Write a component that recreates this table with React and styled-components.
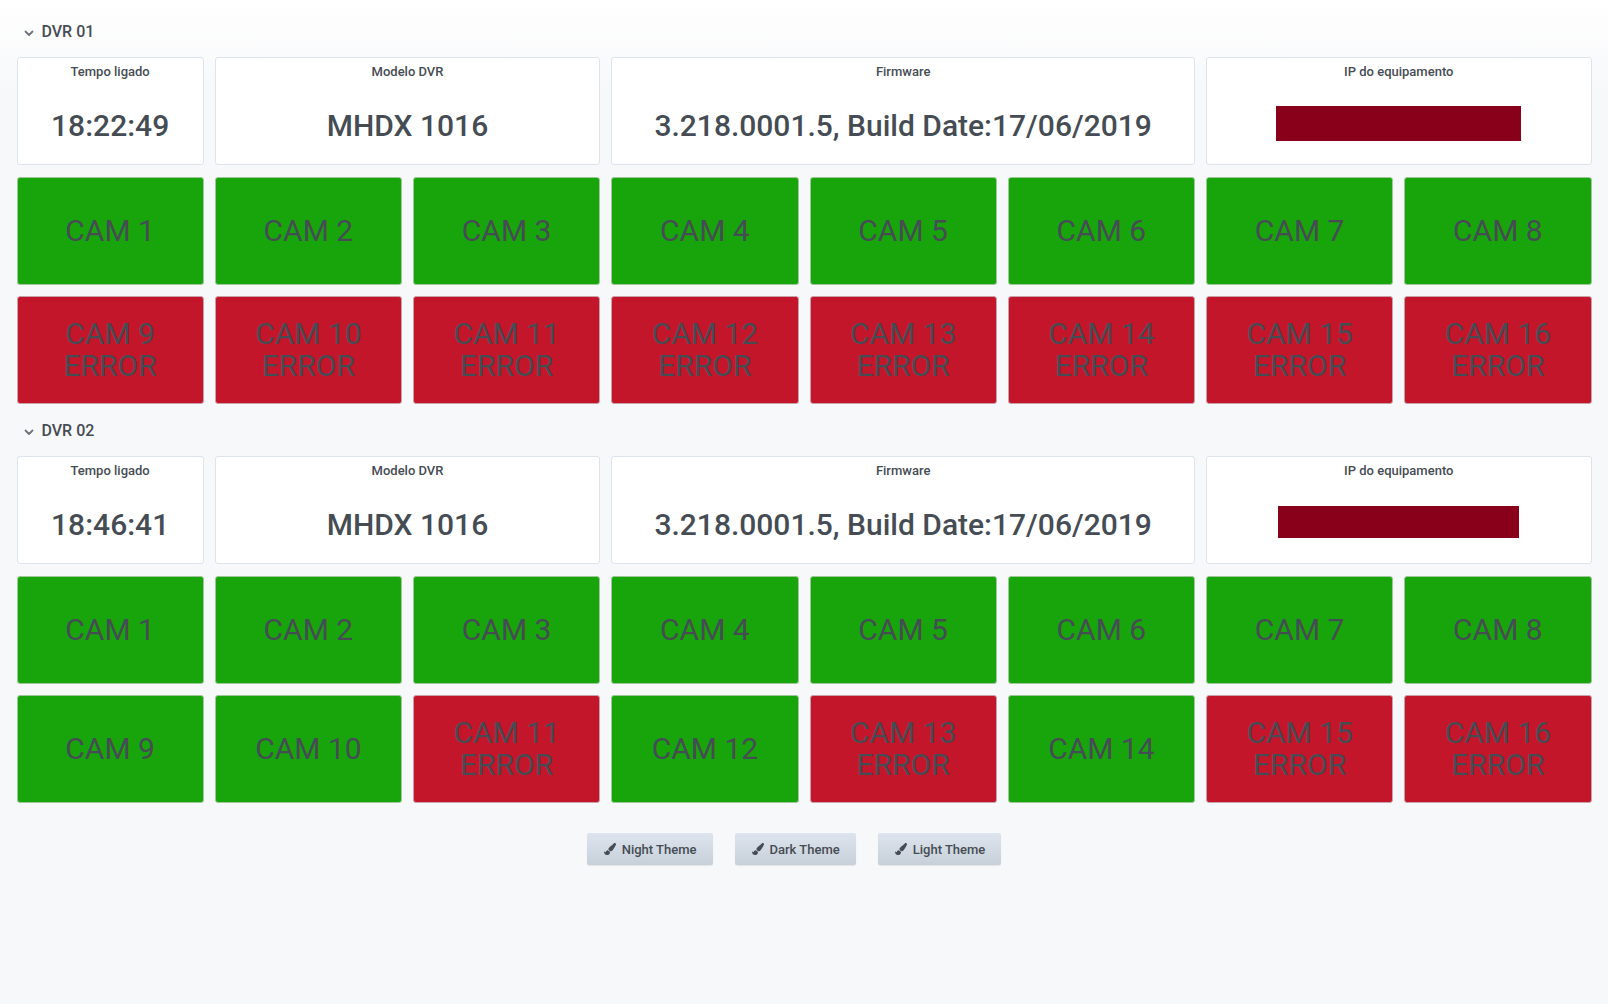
import React from 'react';
import styled, { createGlobalStyle } from 'styled-components';
import { FaPaintBrush } from 'react-icons/fa';

const GlobalStyle = createGlobalStyle`
    html, body {
        margin: 0;
        padding: 0;
    }
    body {
        min-height: 100vh;
        background: linear-gradient(180deg, #ffffff 0px, #f7f8fa 90px, #f7f8fa 100%);
        font-family: Roboto, "Liberation Sans", sans-serif;
        color: #464c54;
    }
`;

const dvrs = [
    {
        name: 'DVR 01',
        uptime: '18:22:49',
        model: 'MHDX 1016',
        firmware: '3.218.0001.5, Build Date:17/06/2019',
        ipBar: { w: 245, h: 35 },
        errors: [9, 10, 11, 12, 13, 14, 15, 16],
    },
    {
        name: 'DVR 02',
        uptime: '18:46:41',
        model: 'MHDX 1016',
        firmware: '3.218.0001.5, Build Date:17/06/2019',
        ipBar: { w: 241, h: 32 },
        errors: [11, 13, 15, 16],
    },
];

const themes = ['Night Theme', 'Dark Theme', 'Light Theme'];

const Chevron = () => (
    <ChevronIcon width="10" height="10" viewBox="0 0 10 10">
        <path d="M1.5 3.5 L5 7 L8.5 3.5" fill="none" stroke="#6e737a" strokeWidth="1.8" strokeLinecap="round" strokeLinejoin="round" />
    </ChevronIcon>
);

const App = () => {
    return (
        <>
            <GlobalStyle />
            <Page>
                {dvrs.map((dvr) => (
                    <React.Fragment key={dvr.name}>
                        <RowHeader>
                            <Chevron />
                            <RowTitle>{dvr.name}</RowTitle>
                        </RowHeader>
                        <Grid>
                            <Panel $span={1}>
                                <PanelTitle>Tempo ligado</PanelTitle>
                                <PanelBody><Value>{dvr.uptime}</Value></PanelBody>
                            </Panel>
                            <Panel $span={2}>
                                <PanelTitle>Modelo DVR</PanelTitle>
                                <PanelBody><Value>{dvr.model}</Value></PanelBody>
                            </Panel>
                            <Panel $span={3}>
                                <PanelTitle>Firmware</PanelTitle>
                                <PanelBody><Value>{dvr.firmware}</Value></PanelBody>
                            </Panel>
                            <Panel $span={2}>
                                <PanelTitle>IP do equipamento</PanelTitle>
                                <PanelBody>
                                    <Redacted style={{ width: dvr.ipBar.w, height: dvr.ipBar.h }} />
                                </PanelBody>
                            </Panel>
                            {Array.from({ length: 16 }, (_, i) => {
                                const n = i + 1;
                                const error = dvr.errors.includes(n);
                                return (
                                    <Cam key={n} $error={error}>
                                        <CamText>
                                            CAM {n}
                                            {error && <><br />ERROR</>}
                                        </CamText>
                                    </Cam>
                                );
                            })}
                        </Grid>
                    </React.Fragment>
                ))}
                <ButtonBar>
                    {themes.map((t) => (
                        <ThemeButton key={t}>
                            <FaPaintBrush size={12} />
                            {t}
                        </ThemeButton>
                    ))}
                </ButtonBar>
            </Page>
        </>
    );
};

const Page = styled.div`
    display: flex;
    flex-direction: column;
    gap: 11px;
    padding: 16px 16.5px 0 16.5px;
`;

const RowHeader = styled.div`
    display: flex;
    align-items: center;
    gap: 8px;
    height: 30px;
    padding-left: 7px;
`;

const ChevronIcon = styled.svg`
    margin-top: 4px;
`;

const RowTitle = styled.span`
    font-size: 16px;
    font-weight: 500;
    color: #464c54;
`;

const Grid = styled.div`
    display: grid;
    grid-template-columns: repeat(8, 1fr);
    grid-auto-rows: 108px;
    column-gap: 11px;
    row-gap: 11.5px;
`;

const Panel = styled.div`
    grid-column: span ${(p) => p.$span};
    display: flex;
    flex-direction: column;
    background: #ffffff;
    border: 1px solid #dde4ed;
    border-radius: 3px;
    box-sizing: border-box;
`;

const PanelTitle = styled.div`
    padding-top: 5px;
    height: 18px;
    line-height: 18px;
    text-align: center;
    font-size: 13px;
    font-weight: 500;
    color: #464c54;
`;

const PanelBody = styled.div`
    flex: 1;
    display: flex;
    align-items: center;
    justify-content: center;
    padding-top: 5px;
`;

const Value = styled.span`
    font-size: 30px;
    font-weight: 500;
    color: #464c54;
    white-space: nowrap;
`;

const Redacted = styled.div`
    background: #880019;
    margin-top: -4px;
`;

const Cam = styled.div`
    display: flex;
    align-items: center;
    justify-content: center;
    background: ${(p) => (p.$error ? '#c4162a' : '#18a40b')};
    border: 1px solid ${(p) => (p.$error ? '#c9a3aa' : '#9fc79a')};
    border-radius: 3px;
    box-sizing: border-box;
`;

const CamText = styled.div`
    font-size: 30px;
    font-weight: 400;
    line-height: 32px;
    text-align: center;
    color: #464c54;
`;

const ButtonBar = styled.div`
    display: flex;
    justify-content: center;
    gap: 22px;
    margin-top: 19px;
    padding-right: 20px;
`;

const ThemeButton = styled.button`
    display: flex;
    align-items: center;
    gap: 6px;
    height: 32px;
    padding: 0 16px 0 17px;
    border: none;
    border-radius: 2px;
    background: linear-gradient(180deg, #dde4ed 0%, #c7d0d9 100%);
    box-shadow: 0 1px 1px rgba(0, 0, 0, 0.08);
    color: #464c54;
    font-family: Roboto, "Liberation Sans", sans-serif;
    font-size: 13px;
    font-weight: 500;
    cursor: pointer;
    svg {
        color: #464c54;
    }
`;

export default App;
